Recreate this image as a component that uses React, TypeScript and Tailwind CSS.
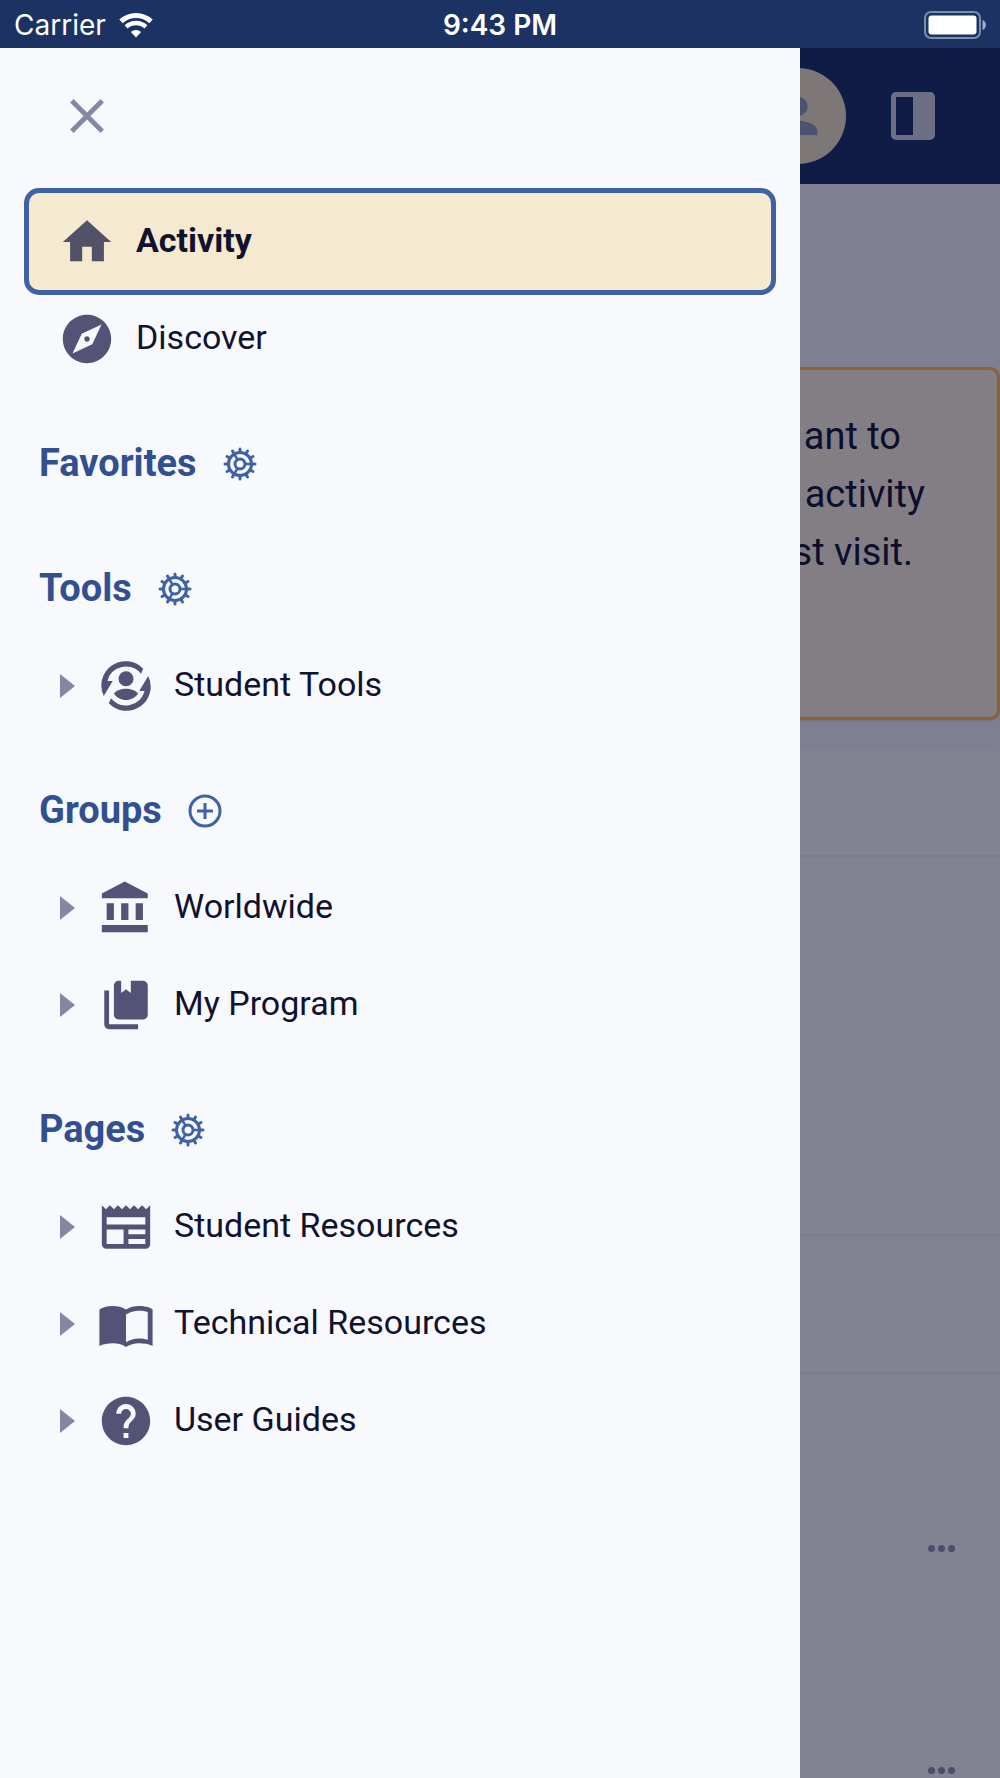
import React, { useState } from "react";
import {
  MdClose,
  MdExplore,
  MdHelp,
  MdHome,
  MdNewspaper,
  MdPerson,
} from "react-icons/md";

type NavItem = { label: string; icon: React.ReactNode };
type NavSection = { title: string; action: "manage" | "add"; items: NavItem[] };

const COG_TEETH = [0, 30, 60, 90, 120, 150, 180, 210, 240, 270, 300, 330];
const COG_SPOKES = [0, 120, 240];

// Material style glyph on the 24 unit grid
function Glyph({ d }: { d: string }) {
  return (
    <svg viewBox="0 0 24 24" width="58" height="58" fill="currentColor" aria-hidden="true">
      <path d={d} />
    </svg>
  );
}

function StudentToolsIcon() {
  return (
    <svg viewBox="0 0 24 24" width="58" height="58" fill="currentColor" aria-hidden="true">
      <path d="M2.8 16.1 6.5 9.9H4.3A8 8 0 0 1 18.2 6.9L19.1 4.9A10 10 0 0 0 2.8 16.1z" />
      <path d="M21.2 7.9 17.5 14.1H19.7A8 8 0 0 1 5.8 17.1L4.9 19.1A10 10 0 0 0 21.2 7.9z" />
      <circle cx="12" cy="9" r="3.1" />
      <path d="M7 15.1c1-1.4 3-2 5-2s4 .6 5 2c-1.100 1.700-2.900 2.700-5 2.700s-3.900-1-5-2.700z" />
    </svg>
  );
}

function CogIcon() {
  return (
    <svg viewBox="0 0 40 40" width="40" height="40" fill="none" stroke="currentColor" strokeWidth="3" strokeLinecap="round" aria-hidden="true">
      <circle cx="20" cy="20" r="11.500" />
      <circle cx="20" cy="20" r="5" />
      {COG_TEETH.map((angle) => (
        <path key={angle} d="M32 20h3" transform={`rotate(${angle} 20 20)`} />
      ))}
      {COG_SPOKES.map((angle) => (
        <path key={angle} d="M25.500 20h6" strokeWidth="2.500" transform={`rotate(${angle} 20 20)`} />
      ))}
    </svg>
  );
}

function AddIcon() {
  return (
    <svg viewBox="0 0 40 40" width="40" height="40" fill="none" stroke="currentColor" strokeWidth="3" aria-hidden="true">
      <circle cx="20" cy="20" r="15" />
      <path d="M12 20h16M20 12v16" />
    </svg>
  );
}

const SECTIONS: NavSection[] = [
  { title: "Favorites", action: "manage", items: [] },
  {
    title: "Tools",
    action: "manage",
    items: [{ label: "Student Tools", icon: <StudentToolsIcon /> }],
  },
  {
    title: "Groups",
    action: "add",
    items: [
      {
        label: "Worldwide",
        icon: <Glyph d="M4 10v7h3v-7H4zm6 0v7h3v-7h-3zM2 22h19v-3H2v3zm14-12v7h3v-7h-3zm-4.500-9L2 6v2h19V6l-9.500-5z" />,
      },
      {
        label: "My Program",
        icon: <Glyph d="M5 6H3v14c0 1.100.9 2 2 2h12v-2H5V6zM9 2c-1.100 0-2 .9-2 2v12c0 1.100.9 2 2 2h10c1.100 0 2-.9 2-2V4c0-1.100-.9-2-2-2h-5v5l-2-1.500L10 7V2H9z" />,
      },
    ],
  },
  {
    title: "Pages",
    action: "manage",
    items: [
      { label: "Student Resources", icon: <MdNewspaper size={58} /> },
      {
        label: "Technical Resources",
        icon: <Glyph d="M21 5c-1.110-.35-2.330-.5-3.500-.5-1.950 0-4.050.4-5.500 1.500-1.450-1.100-3.550-1.500-5.500-1.500S2.450 4.900 1 6v15.150C2.450 20.400 4.550 20 6.500 20s4.050.4 5.500 1.500c1.350-.85 3.800-1.500 5.500-1.500 1.650 0 4.100.3 5.500 1.150V6c-.6-.45-1.250-.75-2-1zm0 13.500c-1.100-.35-2.300-.5-3.500-.5-1.700 0-4.150.65-5.500 1.500V8c1.350-.85 3.800-1.500 5.500-1.500 1.200 0 2.400.15 3.500.5v11.500z" />,
      },
      { label: "User Guides", icon: <MdHelp size={58} /> },
    ],
  },
];

function StatusBar() {
  return (
    <div className="grid h-12 shrink-0 grid-cols-3 items-center bg-[#1b3262] px-[14px] pt-0.5 font-['Inter',sans-serif] text-[28px] leading-8 text-white">
      <div className="flex items-center gap-3">
        <span>Carrier</span>
        <svg width="36" height="26" viewBox="0 0 36 26" fill="none" stroke="currentColor" aria-hidden="true">
          <path d="M3 9.400A22 22 0 0 1 33 9.400" strokeWidth="5" />
          <path d="M8.100 14.900A14.500 14.500 0 0 1 27.900 14.900" strokeWidth="4.500" />
          <path d="M12.900 20A7.500 7.500 0 0 1 23.100 20L18 25.500z" fill="currentColor" stroke="none" />
        </svg>
      </div>
      <span className="text-center font-semibold">9:43 PM</span>
      <svg className="justify-self-end" width="62" height="28" viewBox="0 0 62 28" aria-hidden="true">
        <rect x="1" y="1" width="55" height="26" rx="6" fill="none" stroke="#7e8bab" strokeWidth="2" />
        <rect x="4.500" y="4.500" width="48" height="19" rx="3" fill="#fff" />
        <path d="M58.500 9c4.500 1.500 4.500 8.500 0 10z" fill="#a4adc3" />
      </svg>
    </div>
  );
}

function PageBehind() {
  return (
    <div className="flex h-full flex-col bg-[#7f7f92]">
      <header className="flex h-34 shrink-0 items-center justify-end gap-[45px] bg-[#0f1c45] pr-[65px]">
        <button aria-label="Profile" className="flex size-24 items-center justify-center rounded-full bg-[#7d7877] text-[#4c5372]">
          <MdPerson size={58} />
        </button>
        <button aria-label="Toggle panel" className="h-12 w-11 rounded-[5px] bg-[#6c6f84] p-[5px]">
          <span className="block h-full w-[17px] bg-[#0f1c45]" />
        </button>
      </header>

      <main className="flex-1 overflow-hidden pt-[183px]">
        <section className="h-[353px] rounded-[10px] border-[3px] border-[#8a6138] bg-[#827e84] pt-[37px] text-right text-[38px] leading-[58px] text-[#0c0e2e] shadow-sm">
          <p className="pr-24">ant to</p>
          <p className="pr-[72px]">activity</p>
          <p className="pr-21">last visit.</p>
        </section>

        <section className="mt-[29px] rounded-[10px] bg-[#828391]">
          <div className="h-[109px] border-b-[3px] border-[#7b7c90]" />
          <div className="h-[379px] border-b-[3px] border-[#7b7c90]" />
          <div className="h-[138px] border-b-[3px] border-[#7b7c90]" />
          <div className="pt-[62px]">
            {[0, 1].map((post) => (
              <div key={post} className="flex h-[222px] items-center justify-end pr-[45px]">
                <button aria-label="Post options" className="flex gap-[3px]">
                  <span className="size-[7px] rounded-full bg-[#4c4d6e]" />
                  <span className="size-[7px] rounded-full bg-[#4c4d6e]" />
                  <span className="size-[7px] rounded-full bg-[#4c4d6e]" />
                </button>
              </div>
            ))}
          </div>
        </section>
      </main>
    </div>
  );
}

function Section({ title, action, items }: NavSection) {
  return (
    <section className="mt-7">
      <div className="flex h-[97px] items-center gap-[23px] pl-[10px]">
        <h2 className="pb-0.5 text-[38px] leading-[58px] font-bold text-[#32508f]">{title}</h2>
        <button aria-label={`${action} ${title}`} className="text-[#3f62a5]">
          {action === "add" ? <AddIcon /> : <CogIcon />}
        </button>
      </div>
      {items.map((item) => (
        <button key={item.label} aria-expanded={false} className="flex h-[97px] w-full items-center pl-[31px] text-[#525377]">
          <svg className="mr-[22px]" width="15" height="24" viewBox="0 0 15 24" fill="#8487a4" aria-hidden="true">
            <path d="M0 0l15 12L0 24z" />
          </svg>
          {item.icon}
          <span className="ml-[19px] pb-1 text-[34px] leading-[50px] text-[#10122e]">{item.label}</span>
        </button>
      ))}
    </section>
  );
}

export default function App() {
  const [open, setOpen] = useState(true);

  return (
    <div className="flex h-screen flex-col overflow-hidden font-['Roboto',sans-serif]">
      <StatusBar />
      <div className="relative min-h-0 flex-1">
        <PageBehind />

        {/* Navigation drawer */}
        {open && (
          <aside className="absolute inset-y-0 left-0 w-4/5 overflow-hidden bg-[#f7f9fd] px-[29px]">
            <div className="flex h-[145px] items-start pt-[39px] pl-[29px]">
              <button aria-label="Close menu" onClick={() => setOpen(false)} className="text-[#8487a5]">
                <MdClose size={58} />
              </button>
            </div>

            <nav>
              <a
                href="#activity"
                aria-current="page"
                className="flex h-[97px] items-center gap-5 rounded-[10px] bg-[#f5e9cf] pl-[29px] text-[#515268] outline-[5px] outline-[#3f62a5] outline-solid"
              >
                <MdHome size={58} />
                <span className="pb-1 text-[34px] leading-[50px] font-bold text-[#10122e]">Activity</span>
              </a>
              <a href="#discover" className="flex h-[97px] items-center gap-5 pl-[29px] text-[#525377]">
                <MdExplore size={58} />
                <span className="pb-1 text-[34px] leading-[50px] text-[#10122e]">Discover</span>
              </a>
              {SECTIONS.map((section) => (
                <Section key={section.title} {...section} />
              ))}
            </nav>
          </aside>
        )}
      </div>
    </div>
  );
}
